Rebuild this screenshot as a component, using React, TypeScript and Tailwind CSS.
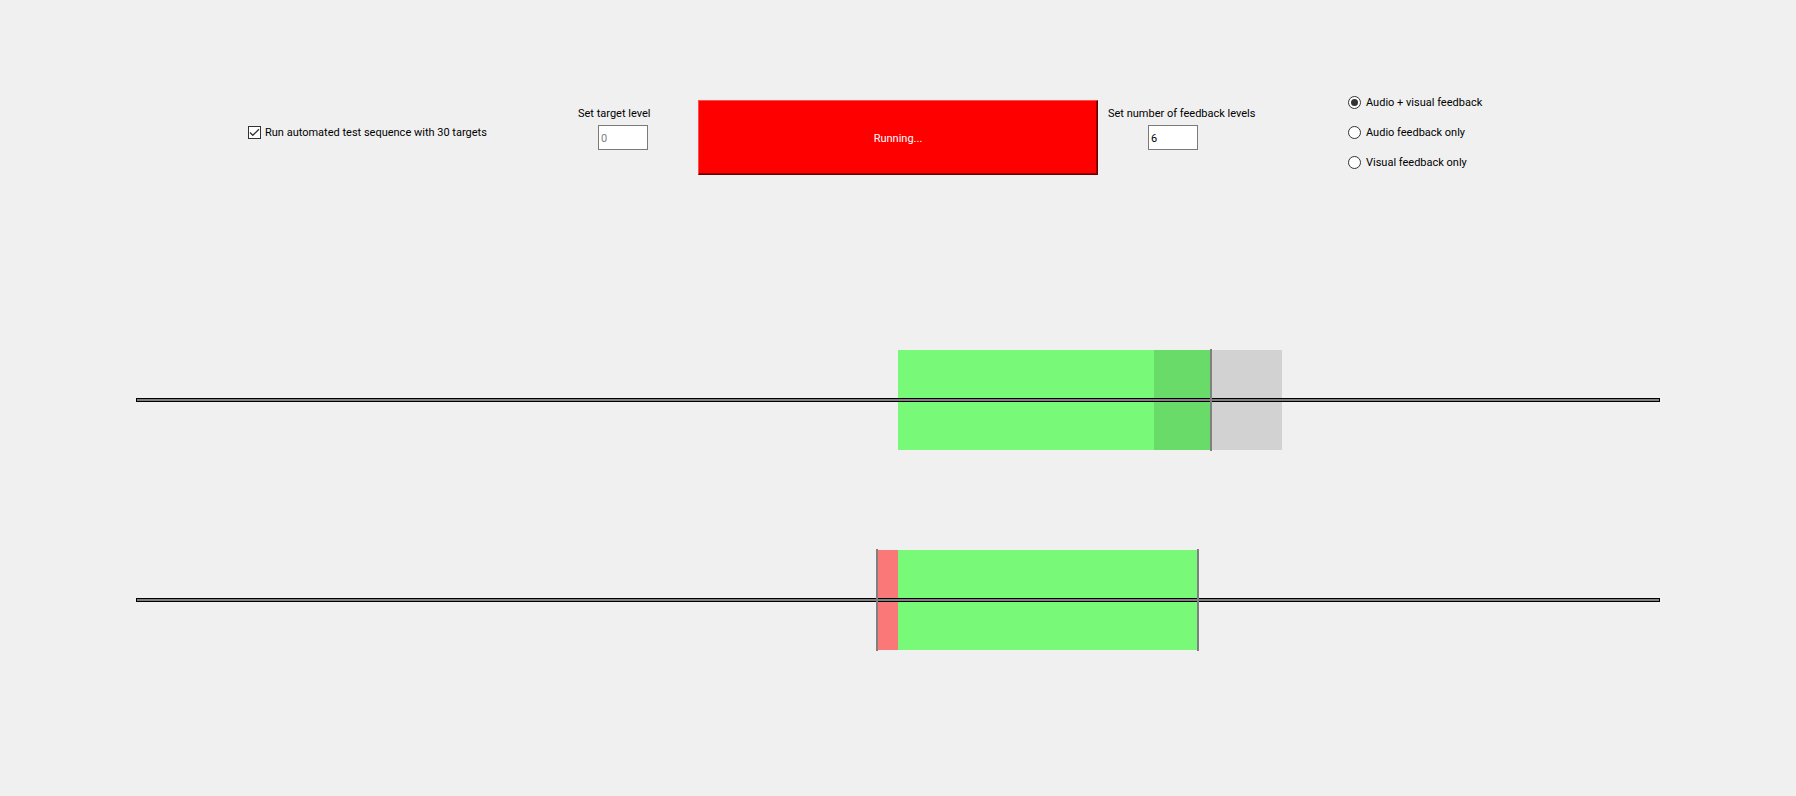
import { useState } from "react";

type Bar = { from: number; to: number; fill: string };

type TrackProps = {
  label: string;
  bars: Bar[];
  markers: number[];
};

const TRACK_WIDTH = 1524;

function Track({ label, bars, markers }: TrackProps) {
  return (
    <svg
      role="img"
      aria-label={label}
      viewBox={`0 0 ${TRACK_WIDTH} 102`}
      className="block w-full"
      shapeRendering="crispEdges"
    >
      {bars.map((bar) => (
        <rect key={bar.from} x={bar.from} y={1} width={bar.to - bar.from} height={100} fill={bar.fill} />
      ))}
      <rect x={0} y={49} width={TRACK_WIDTH} height={4} fill="#000000" />
      <rect x={1} y={50} width={TRACK_WIDTH - 2} height={2} fill="#808080" />
      {markers.map((x) => (
        <rect key={x} x={x} y={0} width={2} height={102} fill="#808080" />
      ))}
    </svg>
  );
}

const MODES = ["Audio + visual feedback", "Audio feedback only", "Visual feedback only"];

export default function App() {
  const [automated, setAutomated] = useState(true);
  const [target, setTarget] = useState("0");
  const [levels, setLevels] = useState("6");
  const [mode, setMode] = useState(MODES[0]);

  return (
    <main className="min-h-screen bg-[#f0f0f0] pt-[87px] font-[Tahoma,Roboto,sans-serif] text-[11px] leading-4 text-black">
      <div className="grid grid-cols-[1fr_400px_1fr] items-start">
        <div className="flex justify-end pr-5">
          <label className="mt-[30px] flex h-[30px] w-[330px] items-center gap-1">
            <span className="relative block size-[13px]">
              <input
                type="checkbox"
                checked={automated}
                onChange={(e) => setAutomated(e.target.checked)}
                className="peer block size-[13px] appearance-none border border-[#333333] bg-white"
              />
              <svg viewBox="0 0 13 13" className="pointer-events-none absolute inset-0 hidden size-[13px] peer-checked:block">
                <path d="M2 6.5 4.8 9.3 11 3.2" fill="none" stroke="#333333" strokeWidth="1.3" />
              </svg>
            </span>
            <span className="pt-0.5">Run automated test sequence with 30 targets</span>
          </label>
          <div className="mt-[18px] w-[100px]">
            <label htmlFor="target" className="block pt-px">
              Set target level
            </label>
            <input
              id="target"
              disabled={automated}
              value={target}
              onChange={(e) => setTarget(e.target.value)}
              className="mt-[3px] ml-5 block h-[25px] w-[50px] border border-[#7a7a7a] bg-white px-0.5 pt-0.5 disabled:text-[#808080]"
            />
          </div>
        </div>

        <button
          type="button"
          className="mt-[13px] h-[75px] border border-t-[#ff4d4d] border-r-[#690000] border-b-[#690000] border-l-[#ff4d4d] bg-[#ff0000] pt-0.5 text-white shadow-[inset_-1px_-1px_0_#a00000]"
        >
          Running...
        </button>

        <div className="flex pl-2.5">
          <div className="mt-[18px] w-[240px]">
            <label htmlFor="levels" className="block pt-px">
              Set number of feedback levels
            </label>
            <input
              id="levels"
              value={levels}
              onChange={(e) => setLevels(e.target.value)}
              className="mt-[3px] ml-10 block h-[25px] w-[50px] border border-[#7a7a7a] bg-white px-0.5 pt-0.5"
            />
          </div>
          <fieldset>
            {MODES.map((name) => (
              <label key={name} className="flex h-[30px] items-center gap-[5px]">
                <span className="relative block size-[13px]">
                  <input
                    type="radio"
                    name="mode"
                    checked={mode === name}
                    onChange={() => setMode(name)}
                    className="peer block size-[13px] appearance-none rounded-full border border-[#333333] bg-white"
                  />
                  <span className="pointer-events-none absolute inset-[3px] hidden rounded-full bg-[#333333] peer-checked:block" />
                </span>
                <span className="pt-0.5">{name}</span>
              </label>
            ))}
          </fieldset>
        </div>
      </div>

      <div className="mt-[172px] flex flex-col gap-[98px] px-[136px]">
        <Track
          label="Feedback level against target"
          bars={[
            { from: 762, to: 1018, fill: "#78fa78" },
            { from: 1018, to: 1074, fill: "#69db69" },
            { from: 1076, to: 1146, fill: "#d2d2d2" },
          ]}
          markers={[1074]}
        />
        <Track
          label="Feedback range"
          bars={[
            { from: 742, to: 762, fill: "#fa7878" },
            { from: 762, to: 1061, fill: "#78fa78" },
          ]}
          markers={[740, 1061]}
        />
      </div>
    </main>
  );
}
